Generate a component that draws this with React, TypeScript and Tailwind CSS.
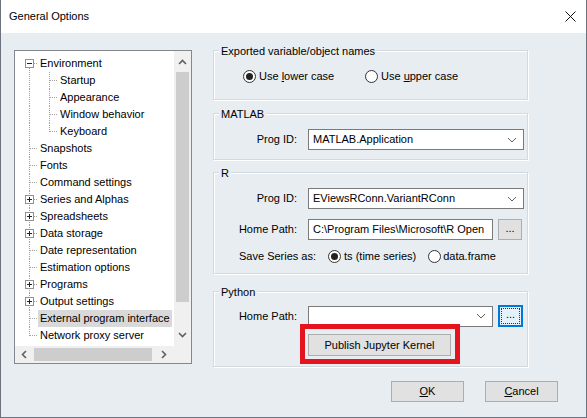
import type { ReactNode } from "react";

const TREE = [
  { label: "Environment", box: "minus" },
  { label: "Startup", child: true },
  { label: "Appearance", child: true },
  { label: "Window behavior", child: true },
  { label: "Keyboard", child: true, lastChild: true },
  { label: "Snapshots" },
  { label: "Fonts" },
  { label: "Command settings" },
  { label: "Series and Alphas", box: "plus" },
  { label: "Spreadsheets", box: "plus" },
  { label: "Data storage", box: "plus" },
  { label: "Date representation" },
  { label: "Estimation options" },
  { label: "Programs", box: "plus" },
  { label: "Output settings", box: "plus" },
  { label: "External program interface", selected: true },
  { label: "Network proxy server" },
];

type Row = (typeof TREE)[number] & { child?: boolean; lastChild?: boolean; box?: string; selected?: boolean };

const DOT = "#a0a0a0";

function Gutter({ row, first, last }: { row: Row; first: boolean; last: boolean }) {
  const w = row.child ? 43 : 23;
  return (
    <svg width={w} height={17} className="shrink-0" shapeRendering="crispEdges">
      {/* main trunk */}
      <line x1={14.5} x2={14.5} y1={first ? 13 : 0} y2={last ? 9 : 17} stroke={DOT} strokeDasharray="1 1" />
      {row.child ? (
        <>
          <line x1={34.5} x2={34.5} y1={0} y2={row.lastChild ? 9 : 17} stroke={DOT} strokeDasharray="1 1" />
          <line x1={35} x2={43} y1={8.5} y2={8.5} stroke={DOT} strokeDasharray="1 1" />
        </>
      ) : (
        <line x1={row.box ? 19 : 15} x2={23} y1={8.5} y2={8.5} stroke={DOT} strokeDasharray="1 1" />
      )}
      {row.box && (
        <>
          <rect x={10.5} y={4.5} width={8} height={8} fill="#fff" stroke="#919191" />
          <line x1={12} x2={17} y1={8.5} y2={8.5} stroke="#222" />
          {row.box === "plus" && <line x1={14.5} x2={14.5} y1={6} y2={11} stroke="#222" />}
        </>
      )}
    </svg>
  );
}

function Chevron({ dir }: { dir: "up" | "down" | "left" | "right" }) {
  const pts = {
    up: "1,6 4.5,2.5 8,6",
    down: "1,3 4.5,6.5 8,3",
    left: "6,1 2.5,4.5 6,8",
    right: "3,1 6.5,4.5 3,8",
  }[dir];
  return (
    <svg width={9} height={9}>
      <polyline points={pts} fill="none" stroke="#606060" strokeWidth={1.6} />
    </svg>
  );
}

function TreeView() {
  return (
    <div className="w-[178px] h-[314px] border border-[#828790] bg-white grid grid-cols-[159px_17px] grid-rows-[295px_17px] shrink-0">
      <div className="overflow-hidden pt-[4px]">
        {TREE.map((r, i) => {
          const row = r as Row;
          return (
            <div key={row.label} className="flex h-[17px] items-center whitespace-nowrap">
              <Gutter row={row} first={i === 0} last={i === TREE.length - 1} />
              <span className={`px-[2px] leading-[17px] ${row.selected ? "bg-[#d9d9d9]" : ""}`}>{row.label}</span>
            </div>
          );
        })}
      </div>
      <div className="bg-[#f0f0f0] flex flex-col">
        <div className="h-[21px] flex items-center justify-center pt-[1px]">
          <Chevron dir="up" />
        </div>
        <div className="flex-1">
          <div className="mx-[2px] h-[230px] bg-[#cdcdcd]" />
        </div>
        <div className="h-[21px] flex items-center justify-center pb-[2px]">
          <Chevron dir="down" />
        </div>
      </div>
      <div className="bg-[#f0f0f0] flex items-center">
        <div className="w-[19px] flex justify-center">
          <Chevron dir="left" />
        </div>
        <div className="w-[118px] h-[13px] bg-[#cdcdcd]" />
        <div className="flex-1 flex justify-center">
          <Chevron dir="right" />
        </div>
      </div>
      <div className="bg-[#f0f0f0]" />
    </div>
  );
}

function Group({ title, className, children }: { title: string; className: string; children: ReactNode }) {
  return (
    <div className={`relative border border-[#d3d9de] shadow-[inset_1px_1px_0_#fff,1px_1px_0_#fff] ${className}`}>
      <span className="absolute -top-[6px] left-[5px] px-[2px] leading-[13px] bg-[#e8edf1]">{title}</span>
      {children}
    </div>
  );
}

function Radio({ checked }: { checked?: boolean }) {
  return (
    <span className="w-[13px] h-[13px] rounded-full border border-[#333] bg-white flex items-center justify-center shrink-0">
      {checked && <span className="w-[7px] h-[7px] rounded-full bg-[#222]" />}
    </span>
  );
}

function Combo({ value, className }: { value: string; className: string }) {
  return (
    <div className={`h-[21px] bg-white border border-[#7a7a7a] flex items-center pl-[4px] pr-[6px] ${className}`}>
      <span className="flex-1 whitespace-nowrap overflow-hidden">{value}</span>
      <svg width={10} height={6}>
        <polyline points="1,1 5,5 9,1" fill="none" stroke="#606060" strokeWidth={1} />
      </svg>
    </div>
  );
}

function Label({ children }: { children: ReactNode }) {
  return <span className="w-[83px] text-right mr-[11px] shrink-0">{children}</span>;
}

export default function App() {
  return (
    <div className="w-[587px] h-[418px] flex flex-col bg-[#e8edf1] border-x border-b border-[#6b747d] font-['Liberation_Sans',Arial,sans-serif] text-[11px] text-black overflow-hidden">
      <div className="h-[33px] bg-white flex items-center justify-between pl-[8px] pr-[10px] shrink-0">
        <span>General Options</span>
        <svg width={11} height={11}>
          <path d="M0.5 0.5 L10.5 10.5 M10.5 0.5 L0.5 10.5" stroke="#111" strokeWidth={1} />
        </svg>
      </div>

      <div className="flex pt-[17px] pl-[13px]">
        <TreeView />

        <div className="ml-[21px] w-[315px] flex flex-col">
          <Group title="Exported variable/object names" className="h-[50px] pt-[19px] pl-[29px]">
            <div className="flex items-center h-[13px]">
              <label className="w-[122px] flex items-center gap-[3px]">
                <Radio checked />
                <span>
                  Use <span className="underline">l</span>ower case
                </span>
              </label>
              <label className="flex items-center gap-[3px]">
                <Radio />
                <span>
                  Use <span className="underline">u</span>pper case
                </span>
              </label>
            </div>
          </Group>

          <Group title="MATLAB" className="mt-[13px] h-[47px] pt-[15px]">
            <div className="flex items-center">
              <Label>Prog ID:</Label>
              <Combo value="MATLAB.Application" className="w-[216px]" />
            </div>
          </Group>

          <Group title="R" className="mt-[12px] h-[102px] pt-[15px]">
            <div className="flex items-center">
              <Label>Prog ID:</Label>
              <Combo value="EViewsRConn.VariantRConn" className="w-[216px]" />
            </div>
            <div className="flex items-center mt-[10px]">
              <Label>Home Path:</Label>
              <div className="w-[185px] h-[21px] bg-white border border-[#7a7a7a] flex items-center pl-[4px] overflow-hidden whitespace-nowrap">
                C:\Program Files\Microsoft\R Open
              </div>
              <button className="ml-[5px] w-[24px] h-[21px] bg-[#e1e1e1] border border-[#adadad] leading-none pb-[3px]">
                ...
              </button>
            </div>
            <div className="flex items-center mt-[10px] pl-[25px] h-[13px]">
              <span className="mr-[12px]">Save Series as:</span>
              <label className="flex items-center gap-[3px] mr-[12px]">
                <Radio checked />
                <span>ts (time series)</span>
              </label>
              <label className="flex items-center gap-[2px]">
                <Radio />
                <span>data.frame</span>
              </label>
            </div>
          </Group>

          <Group title="Python" className="mt-[17px] h-[76px] pt-[13px]">
            <div className="flex items-center">
              <Label>Home Path:</Label>
              <Combo value="" className="w-[185px]" />
              <button className="ml-[5px] w-[25px] h-[22px] bg-[#e5f1fb] border-2 border-[#0078d7] p-[1px]">
                <span className="w-full h-full border border-dotted border-[#333] flex items-center justify-center leading-none pb-[3px]">
                  ...
                </span>
              </button>
            </div>
            <button className="ml-[94px] mt-[7px] w-[143px] h-[22px] bg-[#e1e1e1] border border-[#adadad]">
              Publish Jupyter Kernel
            </button>
            <div className="absolute left-[86px] top-[32px] w-[160px] h-[40px] border-[5px] border-[#e5131d]" />
          </Group>
        </div>
      </div>

      <div className="flex justify-end gap-[21px] pr-[28px] mt-[14px]">
        <button className="w-[73px] h-[21px] bg-[#e1e1e1] border border-[#adadad]">
          <span className="underline">O</span>K
        </button>
        <button className="w-[73px] h-[21px] bg-[#e1e1e1] border border-[#adadad]">
          <span className="underline">C</span>ancel
        </button>
      </div>
    </div>
  );
}
